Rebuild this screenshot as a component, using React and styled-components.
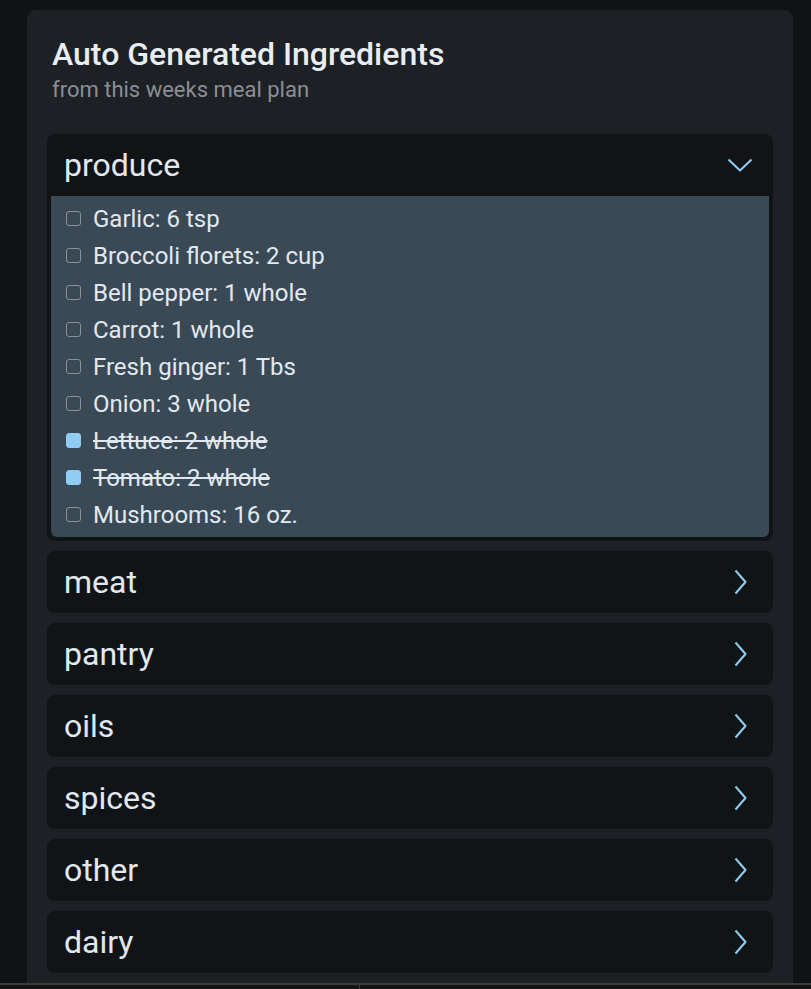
import React, { useState } from "react";
import styled, { createGlobalStyle } from "styled-components";

const GlobalStyle = createGlobalStyle`
  body {
    margin: 0;
    background: #101316;
    font-family: Roboto, "Liberation Sans", sans-serif;
  }
`;

const groups = [
  {
    name: "produce",
    items: [
      { label: "Garlic: 6 tsp", done: false },
      { label: "Broccoli florets: 2 cup", done: false },
      { label: "Bell pepper: 1 whole", done: false },
      { label: "Carrot: 1 whole", done: false },
      { label: "Fresh ginger: 1 Tbs", done: false },
      { label: "Onion: 3 whole", done: false },
      { label: "Lettuce: 2 whole", done: true },
      { label: "Tomato: 2 whole", done: true },
      { label: "Mushrooms: 16 oz.", done: false },
    ],
  },
  { name: "meat", items: [] },
  { name: "pantry", items: [] },
  { name: "oils", items: [] },
  { name: "spices", items: [] },
  { name: "other", items: [] },
  { name: "dairy", items: [] },
];

const ChevronDown = () => (
  <svg width="26" height="14" viewBox="0 0 26 14" fill="none">
    <path d="M1.5 1.5 L13 12.5 L24.5 1.5" stroke="#90cdf4" strokeWidth="2" strokeLinejoin="round" />
  </svg>
);

const ChevronRight = () => (
  <svg width="13" height="26" viewBox="0 0 13 26" fill="none">
    <path d="M1.5 1.5 L11.5 13 L1.5 24.5" stroke="#90cdf4" strokeWidth="2" strokeLinejoin="round" />
  </svg>
);

const App = () => {
  const [open, setOpen] = useState("produce");
  const [list, setList] = useState(groups);

  const toggle = (g, i) => {
    setList(
      list.map((grp) =>
        grp.name !== g
          ? grp
          : {
              ...grp,
              items: grp.items.map((it, j) => (j === i ? { ...it, done: !it.done } : it)),
            }
      )
    );
  };

  return (
    <Page>
      <GlobalStyle />
      <Card>
        <Heading>
          <Title>Auto Generated Ingredients</Title>
          <Subtitle>from this weeks meal plan</Subtitle>
        </Heading>
        <Accordion>
          {list.map((grp) => {
            const isOpen = open === grp.name;
            return (
              <Item key={grp.name}>
                <ItemHeader onClick={() => setOpen(isOpen ? null : grp.name)}>
                  <span>{grp.name}</span>
                  <IconBox>{isOpen ? <ChevronDown /> : <ChevronRight />}</IconBox>
                </ItemHeader>
                {isOpen && (
                  <Panel>
                    {grp.items.map((it, i) => (
                      <Row key={it.label} onClick={() => toggle(grp.name, i)}>
                        <Box $checked={it.done} />
                        <Label $done={it.done}>{it.label}</Label>
                      </Row>
                    ))}
                  </Panel>
                )}
              </Item>
            );
          })}
        </Accordion>
      </Card>
      <BottomBar>
        <BarDivider />
      </BottomBar>
    </Page>
  );
};

const Page = styled.div`
  padding: 10px 17px 0 27px;
`;

const Card = styled.div`
  width: 766px;
  background: #1d2025;
  border-radius: 9px;
  padding: 25px 20px 20px;
  box-sizing: border-box;
`;

const Heading = styled.div`
  padding: 0 5px;
  margin-bottom: 30px;
`;

const Title = styled.h2`
  margin: 0;
  font-size: 32px;
  font-weight: 500;
  line-height: 38px;
  color: #e8edf2;
`;

const Subtitle = styled.p`
  margin: 3px 0 0;
  font-size: 22px;
  line-height: 28px;
  color: #8b8f95;
`;

const Accordion = styled.div`
  display: flex;
  flex-direction: column;
  gap: 10px;
`;

const Item = styled.div`
  background: #111417;
  border-radius: 8px;
  padding: 0 4px;
  overflow: hidden;
`;

const ItemHeader = styled.div`
  height: 62px;
  display: flex;
  align-items: center;
  justify-content: space-between;
  padding: 0 15px 0 13px;
  font-size: 32px;
  color: #e2e8f0;
  cursor: pointer;
`;

const IconBox = styled.div`
  display: flex;
  align-items: center;
  justify-content: center;
  width: 28px;
`;

const Panel = styled.div`
  background: #394a56;
  border-radius: 0 0 6px 6px;
  padding: 4px 0 4px 15px;
  margin-bottom: 4px;
`;

const Row = styled.div`
  height: 37px;
  display: flex;
  align-items: center;
  gap: 12px;
  cursor: pointer;
`;

const Box = styled.span`
  width: 15px;
  height: 15px;
  box-sizing: border-box;
  border-radius: 3px;
  border: 1px solid ${(p) => (p.$checked ? "#90cdf4" : "#8a9298")};
  background: ${(p) => (p.$checked ? "#90cdf4" : "transparent")};
  flex-shrink: 0;
`;

const Label = styled.span`
  font-size: 24px;
  color: #e2e8f0;
  text-decoration: ${(p) => (p.$done ? "line-through" : "none")};
`;

const BottomBar = styled.div`
  position: fixed;
  left: 0;
  right: 0;
  bottom: 0;
  height: 4px;
  background: #141414;
  border-top: 2px solid #3b3c3e;
`;

const BarDivider = styled.div`
  position: absolute;
  left: 359px;
  top: 0;
  bottom: 0;
  width: 1px;
  background: #3b3c3e;
`;

export default App;
